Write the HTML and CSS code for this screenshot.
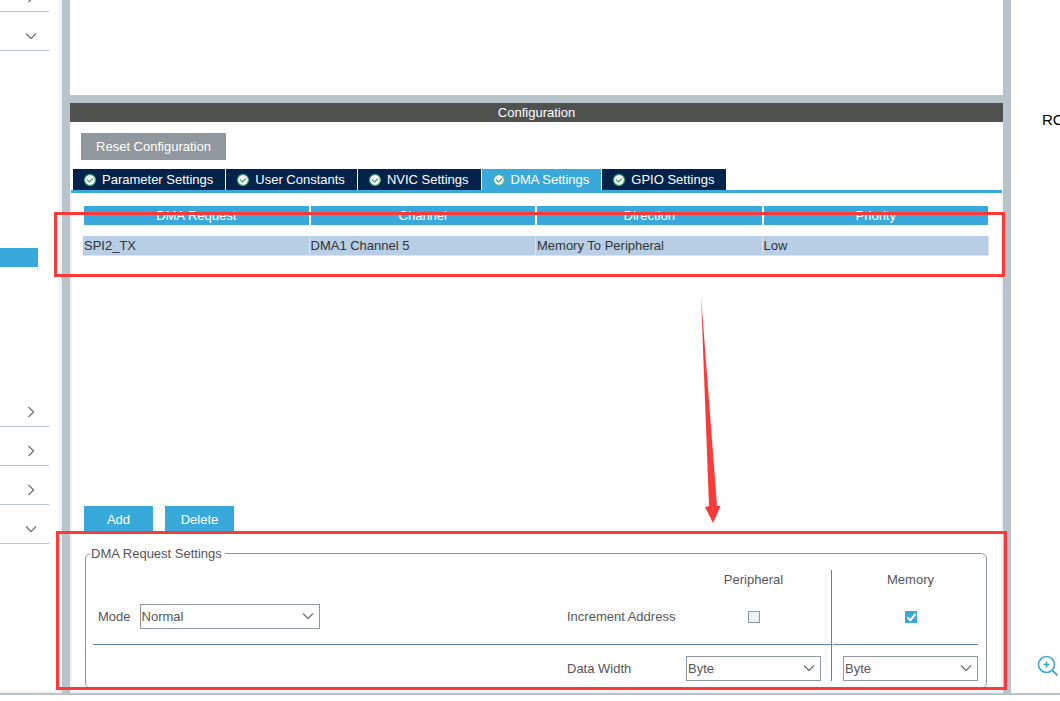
FILE: index.html
```html
<!DOCTYPE html>
<html lang="en">
<head>
    <meta charset="UTF-8">
    <meta name="viewport" content="width=device-width, initial-scale=1.0">
    <title>DMA Configuration</title>
    <link rel="stylesheet" href="styles.css">
</head>
<body>
    <!-- Shared icons -->
    <svg class="icon-defs" width="0" height="0">
        <symbol id="chevron-right" viewBox="0 0 12 12">
            <path d="M3.5 1 L8.5 6 L3.5 11" fill="none" stroke="#777" stroke-width="1.4"/>
        </symbol>
        <symbol id="chevron-down" viewBox="0 0 12 12">
            <path d="M1 3.5 L6 8.5 L11 3.5" fill="none" stroke="#777" stroke-width="1.4"/>
        </symbol>
        <symbol id="check" viewBox="0 0 12 12">
            <circle cx="6" cy="6" r="5.4" fill="#fff" stroke="#4cae78" stroke-width="1.2"/>
            <path d="M3 5.5 L5.5 8 L9 4.5" fill="none" stroke="#4cae78" stroke-width="1.4"/>
        </symbol>
    </svg>

    <div class="workspace">
        <nav class="sidebar">
            <button class="category" aria-label="Expand"><svg class="chevron"><use href="#chevron-right"/></svg></button>
            <button class="category" aria-label="Collapse"><svg class="chevron"><use href="#chevron-down"/></svg></button>
            <div class="peripherals">
                <div class="selected"></div>
            </div>
            <button class="category" aria-label="Expand"><svg class="chevron"><use href="#chevron-right"/></svg></button>
            <button class="category" aria-label="Expand"><svg class="chevron"><use href="#chevron-right"/></svg></button>
            <button class="category" aria-label="Expand"><svg class="chevron"><use href="#chevron-right"/></svg></button>
            <button class="category" aria-label="Collapse"><svg class="chevron"><use href="#chevron-down"/></svg></button>
        </nav>

        <main class="center">
            <div class="mode-pane"></div>
            <h1 class="pane-title">Configuration</h1>
            <div class="toolbar">
                <button class="btn reset">Reset Configuration</button>
            </div>
            <div class="tabs" role="tablist">
                <button class="tab" role="tab"><svg class="check"><use href="#check"/></svg>Parameter Settings</button>
                <button class="tab" role="tab"><svg class="check"><use href="#check"/></svg>User Constants</button>
                <button class="tab" role="tab"><svg class="check"><use href="#check"/></svg>NVIC Settings</button>
                <button class="tab active" role="tab" aria-selected="true"><svg class="check"><use href="#check"/></svg>DMA Settings</button>
                <button class="tab" role="tab"><svg class="check"><use href="#check"/></svg>GPIO Settings</button>
            </div>

            <div class="tab-body">
                <div class="requests">
                    <table class="request-table">
                        <thead>
                            <tr>
                                <th>DMA Request</th>
                                <th>Channel</th>
                                <th>Direction</th>
                                <th>Priority</th>
                            </tr>
                        </thead>
                        <tbody>
                            <tr>
                                <td>SPI2_TX</td>
                                <td>DMA1 Channel 5</td>
                                <td>Memory To Peripheral</td>
                                <td>Low</td>
                            </tr>
                        </tbody>
                    </table>
                    <div class="mark mark-requests"></div>
                </div>

                <div class="actions">
                    <button class="btn">Add</button>
                    <button class="btn">Delete</button>
                    <svg class="arrow" width="22" height="228" viewBox="0 0 22 228">
                        <path d="M1 0 L17 210 L20.5 210 L13 227 L5 211 L9 210 Z" fill="#fd3939"/>
                    </svg>
                </div>

                <div class="settings">
                    <fieldset class="settings-box">
                        <legend>DMA Request Settings</legend>
                        <div class="settings-grid">
                            <div class="cell heading"></div>
                            <div class="cell heading"></div>
                            <div class="cell heading peripheral">Peripheral</div>
                            <div class="cell heading memory">Memory</div>

                            <div class="cell increment mode">
                                <label for="mode">Mode</label>
                                <span class="select">
                                    <select id="mode"><option>Normal</option></select>
                                    <svg class="chevron"><use href="#chevron-down"/></svg>
                                </span>
                            </div>
                            <div class="cell increment">Increment Address</div>
                            <div class="cell increment peripheral"><input type="checkbox" aria-label="Increment peripheral address" disabled></div>
                            <div class="cell increment memory"><input type="checkbox" aria-label="Increment memory address" checked></div>

                            <div class="cell width"></div>
                            <div class="cell width">Data Width</div>
                            <div class="cell width peripheral">
                                <span class="select">
                                    <select aria-label="Peripheral data width"><option>Byte</option></select>
                                    <svg class="chevron"><use href="#chevron-down"/></svg>
                                </span>
                            </div>
                            <div class="cell width memory">
                                <span class="select">
                                    <select aria-label="Memory data width"><option>Byte</option></select>
                                    <svg class="chevron"><use href="#chevron-down"/></svg>
                                </span>
                            </div>
                        </div>
                    </fieldset>
                    <div class="mark mark-settings"></div>
                </div>
            </div>
        </main>

        <aside class="pinout">
            <span class="pin-label">RC</span>
            <button class="zoom-in" aria-label="Zoom in">
                <svg width="22" height="22" viewBox="0 0 22 22" fill="none" stroke="#39a9dc">
                    <circle cx="9.5" cy="9.5" r="8" stroke-width="1.6"/>
                    <path d="M6.5 9.5 H12.5 M9.5 6.5 V12.5" stroke-width="1.6"/>
                    <path d="M15.5 15.5 L20.5 20.5" stroke-width="1.8"/>
                </svg>
            </button>
        </aside>
    </div>
</body>
</html>
```
FILE: styles.css
```css
/* Base styles */
* {
    box-sizing: border-box;
}

body {
    margin: 0;
    height: 100vh;
    overflow: hidden;
    background: #fff;
    color: #55555a;
    font-family: "Liberation Sans", Arial, sans-serif;
    font-size: 13px;
    line-height: 15px;
}

button, select {
    font: inherit;
    color: inherit;
    border: none;
    border-radius: 0;
    background: none;
    padding: 0;
    margin: 0;
}

.icon-defs {
    position: absolute;
}

.workspace {
    display: flex;
    height: calc(100vh - 6px);
    border-bottom: 2px solid #b9c4ca;
}

/* Left category tree */
.sidebar {
    width: 62px;
    flex: none;
    overflow: hidden;
    border-right: 3px solid #f1f2f3;
    border-bottom: 2px solid #f1f2f3;
}

.category {
    display: flex;
    justify-content: flex-end;
    align-items: center;
    width: 49px;
    height: 39px;
    padding: 9px 12px 0 0;
    border-bottom: 1px solid #b9c4ca;
}

.category:first-child {
    margin-top: -27px;
}

.chevron {
    display: block;
    width: 12px;
    height: 12px;
}

.peripherals {
    height: 337px;
    padding-top: 197px;
}

.selected {
    width: 38px;
    height: 19px;
    background: #39a9dc;
}

/* Center panel */
.center {
    flex: 1;
    display: flex;
    flex-direction: column;
    border-left: 8px solid #b9c4ca;
    border-right: 8px solid #b9c4ca;
}

.mode-pane {
    height: 103px;
    border-bottom: 8px solid #b9c4ca;
}

.pane-title {
    margin: 0;
    padding: 2px 0;
    background: #50524f;
    color: #fff;
    font-size: 13px;
    font-weight: normal;
    line-height: 15px;
    text-align: center;
}

.toolbar {
    padding: 11px 11px 9px;
}

.btn {
    width: 69px;
    height: 27px;
    background: #39a9dc;
    color: #fff;
}

.btn.reset {
    display: block;
    width: 145px;
    background: #90979d;
}

.tabs {
    display: flex;
    gap: 1px;
    margin: 0 1px;
    padding-left: 2px;
    border-bottom: 3px solid #39a9dc;
}

.tab {
    display: flex;
    align-items: center;
    gap: 6px;
    height: 21px;
    padding: 0 12px 0 11px;
    background: #03234b;
    color: #fff;
    white-space: nowrap;
}

.tab.active {
    background: #39a9dc;
}

.check {
    width: 12px;
    height: 12px;
}

.tab-body {
    flex: 1;
    display: flex;
    flex-direction: column;
    padding: 13px 12px 0 11px;
    border: solid #f1f2f3;
    border-width: 0 2px 2px;
}

/* Request table */
.requests {
    position: relative;
    flex: 1;
}

.request-table {
    width: 100%;
    table-layout: fixed;
    border-spacing: 0;
}

.request-table th {
    padding: 2px 0;
    background: #39a9dc;
    background-clip: padding-box;
    border: 1px solid transparent;
    border-width: 0 1px 11px;
    color: #fff;
    font-weight: normal;
}

.request-table td {
    padding: 2px 0 2px 1px;
    background: #b8cee5;
    border: 1px solid #dfe3e6;
    border-width: 0 1px 1px 0;
    color: #333;
}

.actions {
    position: relative;
    display: flex;
    gap: 12px;
    padding-left: 1px;
}

/* DMA request settings */
.settings {
    position: relative;
    padding: 13px 2px 2px;
}

.settings-box {
    margin: 0;
    padding: 9px 8px 7px 7px;
    border: 1px solid #90979d;
    border-radius: 6px;
}

.settings-box legend {
    margin-left: -3px;
    padding: 0 3px 0 1px;
}

.settings-grid {
    display: grid;
    grid-template-columns: 1fr 119px 146px 146px;
}

.cell {
    display: flex;
    align-items: center;
}

.heading {
    height: 20px;
    padding-bottom: 2px;
}

.increment {
    height: 55px;
    padding-bottom: 1px;
    border-bottom: 1px solid #5b7fc0;
}

.width {
    height: 36px;
    padding-top: 11px;
}

.mode {
    gap: 9px;
    padding-left: 5px;
}

.mode .select {
    width: 180px;
}

.peripheral {
    justify-content: center;
    padding-right: 10px;
    border-right: 1px solid #5b7fc0;
}

.memory {
    justify-content: center;
    margin-left: 1px;
    padding-left: 10px;
}

.select {
    position: relative;
    width: 100%;
}

.select select {
    display: block;
    width: 100%;
    height: 25px;
    padding-left: 1px;
    border: 1px solid #90979d;
    background: #fff;
    appearance: none;
}

.select .chevron {
    position: absolute;
    top: 6px;
    right: 6px;
    pointer-events: none;
}

input[type="checkbox"] {
    appearance: none;
    width: 12px;
    height: 12px;
    margin: 0;
    background: #f0f1f3;
    border: 1px solid #90979d;
}

input[type="checkbox"]:checked {
    background: #39a9dc;
    border-color: #39a9dc;
}

input[type="checkbox"]:checked::after {
    content: "";
    display: block;
    box-sizing: border-box;
    width: 5px;
    height: 9px;
    margin-left: 3px;
    border: solid #fff;
    border-width: 0 2px 2px 0;
    transform: rotate(40deg);
}

/* Red callouts */
.mark {
    position: absolute;
    border: 3px solid #fd3939;
    pointer-events: none;
}

.mark-requests {
    top: 6px;
    left: -29px;
    right: -16px;
    height: 65px;
}

.mark-settings {
    top: -2px;
    left: -27px;
    right: -18px;
    bottom: 1px;
}

.arrow {
    position: absolute;
    left: 617px;
    bottom: 9px;
}

/* Pinout view */
.pinout {
    width: 49px;
    flex: none;
    display: flex;
    flex-direction: column;
    justify-content: space-between;
    padding: 111px 0 16px 26px;
    overflow: hidden;
}

.pin-label {
    color: #000;
    font-size: 15px;
    line-height: 18px;
    margin-left: 5px;
}

.zoom-in svg {
    display: block;
}
```
